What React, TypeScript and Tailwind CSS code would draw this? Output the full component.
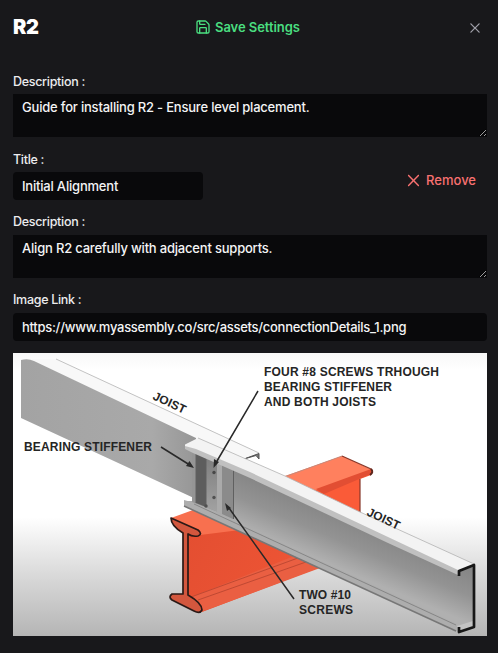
import React from "react";
import { Save } from "lucide-react";
import { RxCross2 } from "react-icons/rx";

const field =
  "block w-full border-0 bg-[#09090b] px-[9px] text-[13px] font-medium leading-[18px] text-[#f4f4f5] outline-none";

function Label({ children }: { children: React.ReactNode }) {
  return (
    <div className="text-[12.5px] font-medium leading-4 tracking-[-0.3px] text-[#ececee]">{children}</div>
  );
}

function ConnectionDrawing() {
  return (
    <svg className="mt-3 block h-[283px] w-[474px]" viewBox="13 353 474 283" role="img">
      <defs>
        <linearGradient id="floor" x1="0" y1="0" x2="0" y2="1">
          <stop offset="0" stopColor="#f8f8f8" />
          <stop offset="0.06" stopColor="#fff" />
          <stop offset="0.58" stopColor="#fff" />
          <stop offset="0.78" stopColor="#dadada" />
          <stop offset="1" stopColor="#b5b5b5" />
        </linearGradient>
        <linearGradient id="web" gradientUnits="userSpaceOnUse" x1="345" y1="515" x2="325" y2="562">
          <stop offset="0" stopColor="#858585" />
          <stop offset="0.5" stopColor="#939393" />
          <stop offset="1" stopColor="#b0b0b0" />
        </linearGradient>
        <linearGradient id="backWeb" x1="0" y1="0" x2="1" y2="0">
          <stop offset="0" stopColor="#a3a3a3" />
          <stop offset="0.75" stopColor="#a9a9a9" />
          <stop offset="1" stopColor="#969696" />
        </linearGradient>
        <linearGradient id="pocket" x1="0" y1="0" x2="0" y2="1">
          <stop offset="0" stopColor="#7d7d7d" />
          <stop offset="1" stopColor="#a2a2a2" />
        </linearGradient>
        <linearGradient id="red" x1="0" y1="0" x2="1" y2="0.4">
          <stop offset="0" stopColor="#e34e31" />
          <stop offset="1" stopColor="#ee5535" />
        </linearGradient>
      </defs>
      <rect x="13" y="353" width="474" height="283" fill="url(#floor)" />

      {/* rear joist */}
      <path d="M30 359H56L260 453L247 458L196 439L34 361Z" fill="#f8f8f8" />
      <path d="M56 359L259 453" stroke="#c2c2c2" fill="none" />
      <path d="M21 360Q28 358 34 361L196 438V499L21 418Z" fill="url(#backWeb)" />
      <path d="M244 459L259 453.500V459L256 455.500Z" fill="#777" stroke="#555" strokeWidth="1" />

      {/* crossing beam, far side */}
      <path d="M284 477L342 456L372 470L371 475L360 479V514L300 490Z" fill="#fa5b38" />
      <path d="M282 477L342 456L372 470L318 490L305 489Z" fill="#ff805e" />
      <path d="M284 477L342 456" stroke="#b98a80" strokeWidth=".8" />
      <path d="M316 489L371 469L371 474L324 494Z" fill="#e24e33" />
      <path d="M342 456L371 469Q374 472 370 475M360 479V514" stroke="#87382a" strokeWidth="1.2" fill="none" />
      <path d="M371 469Q374 472 370 475" stroke="#5e261d" strokeWidth="2" fill="none" />

      {/* crossing beam, near side */}
      <path d="M188 520L210 512L310 553L318 568L202 612L188 600Z" fill="url(#red)" />
      <path d="M171 518L193 510L240 530L200 535Z" fill="#f8704f" />
      <path d="M189 598L294 556L320 568L201 612Z" fill="#ea5f42" />
      <path d="M191 597L298 558M198 600L306 562" stroke="#bf4933" strokeWidth="1" fill="none" />
      <path
        d="M171 518L198 530Q203 534 198 536Q192 537 188 534V595Q202 603 202 610Q200 614 194 611L172 600Q168 597 172 594L183 594V533Q171 526 171 518Z"
        fill="#d3573e"
        stroke="#2b1916"
        strokeWidth="1.7"
        strokeLinejoin="round"
      />

      {/* front joist */}
      <path d="M193 449L219 458L474 566V624L456 629L184 503V501H194Z" fill="url(#web)" />
      <path d="M184 500L195 503L457 624V631L184 506Z" fill="#adadad" />
      <path d="M184 506L456 631" stroke="#777" strokeWidth="1.6" fill="none" />
      <path d="M194 504L456 625" stroke="#868686" strokeWidth="1" fill="none" />
      <path d="M457 626L473 621V627L459 632Z" fill="#c4c4c4" />

      {/* bearing stiffener */}
      <path d="M192 449L234 467V518L192 502Z" fill="#959595" />
      <path d="M196 452L206 456V507L196 503Z" fill="#5d5d5d" />
      <path d="M206 456L218 461V512L206 507Z" fill="url(#pocket)" />
      <path d="M217 460L222 462V515L217 513Z" fill="#aaa" />
      <path d="M222 462L233 467V519L222 514Z" fill="#8b8b8b" />
      <path d="M196 451V503M206 455V506M233.500 468V519" stroke="#606060" strokeWidth="1" fill="none" />
      <circle cx="214" cy="472.500" r="1.7" fill="#484848" />
      <circle cx="214" cy="497.500" r="1.7" fill="#505050" />
      <circle cx="206" cy="506" r="1.7" fill="#505050" />

      <path d="M185 444.500L198 438L285 476L360 512L474 564L458 571L388 539L250 474L195 450L185 448Z" fill="#f3f3f3" />
      <path d="M185 446L196 449L250 472L388 537L458 570V575L388 543L250 478L193 453L185 449Z" fill="#c0c0c0" />
      <path d="M198 438L285 476L360 512L474 564" stroke="#b3b3b3" strokeWidth=".8" fill="none" />
      <path
        d="M459 576V571L474 565V627L459 632V627"
        fill="none"
        stroke="#171717"
        strokeWidth="2.7"
        strokeLinejoin="round"
      />

      {/* leaders */}
      <g stroke="#292929" strokeWidth="1.5" fill="#292929">
        <path d="M161 447L189 464.500M258 391L217 461M294 599L229 508" />
        <path stroke="none" d="M194 468L186 466L189.500 461ZM213.500 468L214 459L219 462ZM225 503L227 511L231 508Z" />
      </g>

      {/* callouts */}
      <g fill="#252525" fontFamily="Liberation Sans, Arial, sans-serif" fontWeight="700" fontSize="12">
        <text x="264" y="375.500" textLength="175">FOUR #8 SCREWS TRHOUGH</text>
        <text x="264" y="390.500" textLength="128">BEARING STIFFENER</text>
        <text x="264" y="405.500" textLength="112">AND BOTH JOISTS</text>
        <text x="24" y="450.500" textLength="128">BEARING STIFFENER</text>
        <text x="299" y="599" textLength="52">TWO #10</text>
        <text x="299" y="614" textLength="54">SCREWS</text>
        <text transform="translate(152 399) rotate(25)" textLength="35">JOIST</text>
        <text transform="translate(366 515) rotate(25)" textLength="35">JOIST</text>
      </g>
    </svg>
  );
}

export default function App() {
  return (
    <main className="h-[653px] w-[498px] overflow-hidden bg-[#18181b] pl-[13px] pr-[11px] font-['Inter','Liberation_Sans',sans-serif]">
      <header className="flex h-[74px] items-start justify-between pt-[14px]">
        <h1 className="w-[183px] text-xl font-black leading-[27px] tracking-[-0.3px] text-white">R2</h1>
        <button className="flex h-[27px] items-center gap-1 text-[13px] font-semibold tracking-[-0.05px] text-[#4ade80]">
          <Save size={16} className="-ml-px mb-0.5" />
          <span>Save Settings</span>
        </button>
        <button aria-label="Close" className="ml-auto mr-1 mt-1.5 text-[#a1a1aa]">
          <RxCross2 size={16} />
        </button>
      </header>

      <Label>Description :</Label>
      <textarea
        className={`${field} mt-1 h-[43px] py-1 tracking-[-0.2px]`}
        defaultValue="Guide for installing R2 - Ensure level placement."
      />

      <div className="mt-[15px] flex h-[48px] justify-between">
        <div className="w-[190px]">
          <Label>Title :</Label>
          <input className={`${field} mt-1 h-7 rounded tracking-[-0.2px]`} defaultValue="Initial Alignment" />
        </div>
        <button className="mr-[11px] mt-[19px] flex h-5 items-center gap-[3px] text-[13px] font-medium text-[#f87171]">
          <RxCross2 size={19} className="mb-px" />
          <span>Remove</span>
        </button>
      </div>

      <div className="mt-[14px]">
        <Label>Description :</Label>
        <textarea
          className={`${field} mt-[5px] h-[43px] py-1 tracking-[-0.2px]`}
          defaultValue="Align R2 carefully with adjacent supports."
        />
      </div>

      <div className="mt-[14px]">
        <Label>Image Link :</Label>
        <input
          className={`${field} mt-[5px] h-7 rounded tracking-[-0.28px]`}
          defaultValue="https://www.myassembly.co/src/assets/connectionDetails_1.png"
        />
      </div>
      <ConnectionDrawing />
    </main>
  );
}
